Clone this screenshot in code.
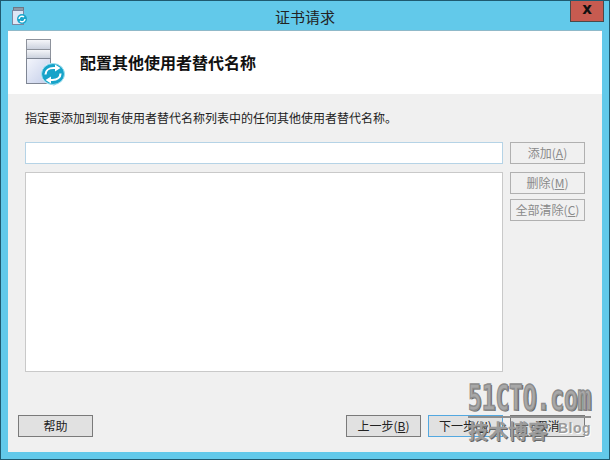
<template>
  <div class="window">
    <div class="titlebar">
      <svg class="app-icon" width="16" height="18" viewBox="0 0 16 18">
        <rect x="1.5" y="0.5" width="10" height="3" fill="#8f9aa8" stroke="#6d7785" />
        <rect x="0.5" y="3.5" width="11" height="14" fill="#dfe6f5" stroke="#7b86a0" />
        <circle cx="10" cy="12" r="5" fill="#19a6cc" />
        <path d="M7 12a3 3 0 0 1 5-2M13 12a3 3 0 0 1-5 2" fill="none" stroke="#fff" stroke-width="1.4" />
      </svg>
      <div class="title">证书请求</div>
      <div class="close">x</div>
    </div>
    <div class="client">
      <div class="header">
        <svg class="hero" width="42" height="50" viewBox="0 0 42 50">
          <defs>
            <linearGradient id="srv" x1="0" y1="0" x2="1" y2="1">
              <stop offset="0" stop-color="#f4f6fc" />
              <stop offset="1" stop-color="#c3cde9" />
            </linearGradient>
            <linearGradient id="bar" x1="0" y1="0" x2="0" y2="1">
              <stop offset="0" stop-color="#f7f8fb" />
              <stop offset="1" stop-color="#c9cfdc" />
            </linearGradient>
          </defs>
          <rect x="0.5" y="0.5" width="24" height="10" fill="url(#bar)" stroke="#8d929c" />
          <rect x="0.5" y="10.5" width="24" height="9" fill="url(#bar)" stroke="#8d929c" />
          <rect x="0.5" y="19.5" width="24" height="25" fill="url(#srv)" stroke="#7f8694" />
          <ellipse cx="27" cy="35" rx="12" ry="11" fill="#ffffff" />
          <path d="M31 44l-3 3-5-3z" fill="#a9e0ef" />
          <ellipse cx="27" cy="35" rx="11.500" ry="10.500" fill="#17a3c9" stroke="#9cdff0" stroke-width="1" />
          <path d="M19.500 35.500c0-4 3.500-6.500 8-6.500h3M34.500 34.500c0 4-3.500 6.500-8 6.500h-3" fill="none" stroke="#fff" stroke-width="2.200" />
          <path d="M29 25.500l5.500 3.500-5.500 3.500zM25 44.500l-5.500-3.500 5.500-3.500z" fill="#fff" />
        </svg>
        <h1 class="heading">配置其他使用者替代名称</h1>
      </div>
      <div class="body">
        <p class="intro">指定要添加到现有使用者替代名称列表中的任何其他使用者替代名称。</p>
        <div class="fields">
          <div class="left">
            <div class="input"></div>
            <div class="list"></div>
          </div>
          <div class="right">
            <button class="btn off add">添加(<u>A</u>)</button>
            <button class="btn off">删除(<u>M</u>)</button>
            <button class="btn off">全部清除(<u>C</u>)</button>
          </div>
        </div>
        <div class="footer">
          <button class="btn on">帮助</button>
          <div class="nav">
            <button class="btn on">上一步(<u>B</u>)</button>
            <button class="btn primary">下一步(<u>N</u>)</button>
            <button class="btn on">取消</button>
          </div>
        </div>
      </div>
    </div>
    <div class="watermark">
      <div class="wm-main">51CTO.com</div>
      <div class="wm-line"></div>
      <div class="wm-sub"><span class="wm-cn">技术博客</span><span class="wm-blog">Blog</span></div>
    </div>
  </div>
</template>

<style>
html, body { margin: 0; padding: 0; }
</style>

<style scoped>
.window {
  position: relative;
  box-sizing: border-box;
  width: 610px;
  height: 460px;
  display: flex;
  flex-direction: column;
  background: #62c9ea;
  border: 1px solid #1f5a70;
  font-family: "Noto Sans CJK SC", "Liberation Sans", sans-serif;
  overflow: hidden;
}
.titlebar {
  position: relative;
  height: 30px;
  flex: none;
  display: flex;
  align-items: center;
  justify-content: center;
}
.app-icon { position: absolute; left: 11px; top: 6px; }
.title {
  font-size: 15px;
  color: #222;
}
.close {
  position: absolute;
  right: 5px;
  top: -1px;
  box-sizing: border-box;
  width: 34px;
  height: 22px;
  background: #c75b50;
  border: 1px solid #4a4a4a;
  border-top: none;
  color: #111;
  font: bold 15px/18px "DejaVu Sans", sans-serif;
  text-align: center;
}
.client {
  flex: 1;
  margin: 0 7px 7px 7px;
  display: flex;
  flex-direction: column;
  background: #f0f0f0;
  box-shadow: 0 -1px 0 #8fb9c9;
}
.header {
  height: 63px;
  flex: none;
  background: #fff;
  display: flex;
  align-items: flex-start;
  padding-left: 18px;
}
.hero { margin-top: 8px; flex: none; }
.heading {
  margin: 21px 0 0 12px;
  font-size: 16px;
  line-height: 20px;
  font-weight: 700;
  color: #111;
}
.body {
  flex: 1;
  display: flex;
  flex-direction: column;
  padding: 0 17px 15px 10px;
  min-height: 0;
}
.intro {
  margin: 15px 0 0 7px;
  font-size: 12px;
  line-height: 18px;
  color: #222;
}
.fields {
  display: flex;
  gap: 7px;
  margin: 15px 0 0 7px;
}
.left {
  width: 478px;
  display: flex;
  flex-direction: column;
  gap: 8px;
}
.input {
  box-sizing: border-box;
  height: 22px;
  background: #fff;
  border: 1px solid #b5d3e6;
}
.list {
  box-sizing: border-box;
  height: 200px;
  background: #fff;
  border: 1px solid #c9c9c9;
}
.right {
  display: flex;
  flex-direction: column;
  gap: 5px;
}
.add { margin-bottom: 3px; }
.btn {
  box-sizing: border-box;
  width: 75px;
  height: 22px;
  padding: 0;
  font-family: "Noto Sans CJK SC", "Liberation Sans", sans-serif;
  font-size: 12px;
  line-height: 18px;
  white-space: nowrap;
  border-radius: 0;
}
.off {
  background: #f0f0f0;
  border: 1px solid #b0b0b0;
  color: #8a8a8a;
}
.on {
  background: #e1e1e1;
  border: 1px solid #7a7a7a;
  color: #222;
}
.primary {
  background: #e1e1e1;
  border: 1px solid #53a8e0;
  color: #222;
}
.footer {
  margin-top: auto;
  display: flex;
  justify-content: space-between;
}
.nav { display: flex; gap: 7px; }
.watermark {
  position: absolute;
  left: 467px;
  top: 383px;
  width: 123px;
  color: #a8a8a8;
}
.wm-main {
  height: 32px;
  font: bold 35px/29px "DejaVu Sans Mono", monospace;
  transform: scaleX(0.65);
  transform-origin: left top;
  white-space: nowrap;
  -webkit-text-stroke: 1.5px #8c8c8c;
  text-shadow: 2px 1px 0 #666;
}
.wm-line {
  height: 2px;
  background: #8f8f8f;
}
.wm-sub {
  display: flex;
  align-items: flex-start;
  justify-content: space-between;
  height: 26px;
  white-space: nowrap;
}
.wm-cn {
  font-size: 20px;
  line-height: 26px;
  font-weight: 700;
  color: #9c9c9c;
  text-shadow: 1px 1px 0 #666;
}
.wm-blog {
  font: bold 14px/20px "Liberation Sans", sans-serif;
  letter-spacing: 0.500px;
  color: #9c9c9c;
  text-shadow: 1px 1px 0 #fff;
}
</style>
